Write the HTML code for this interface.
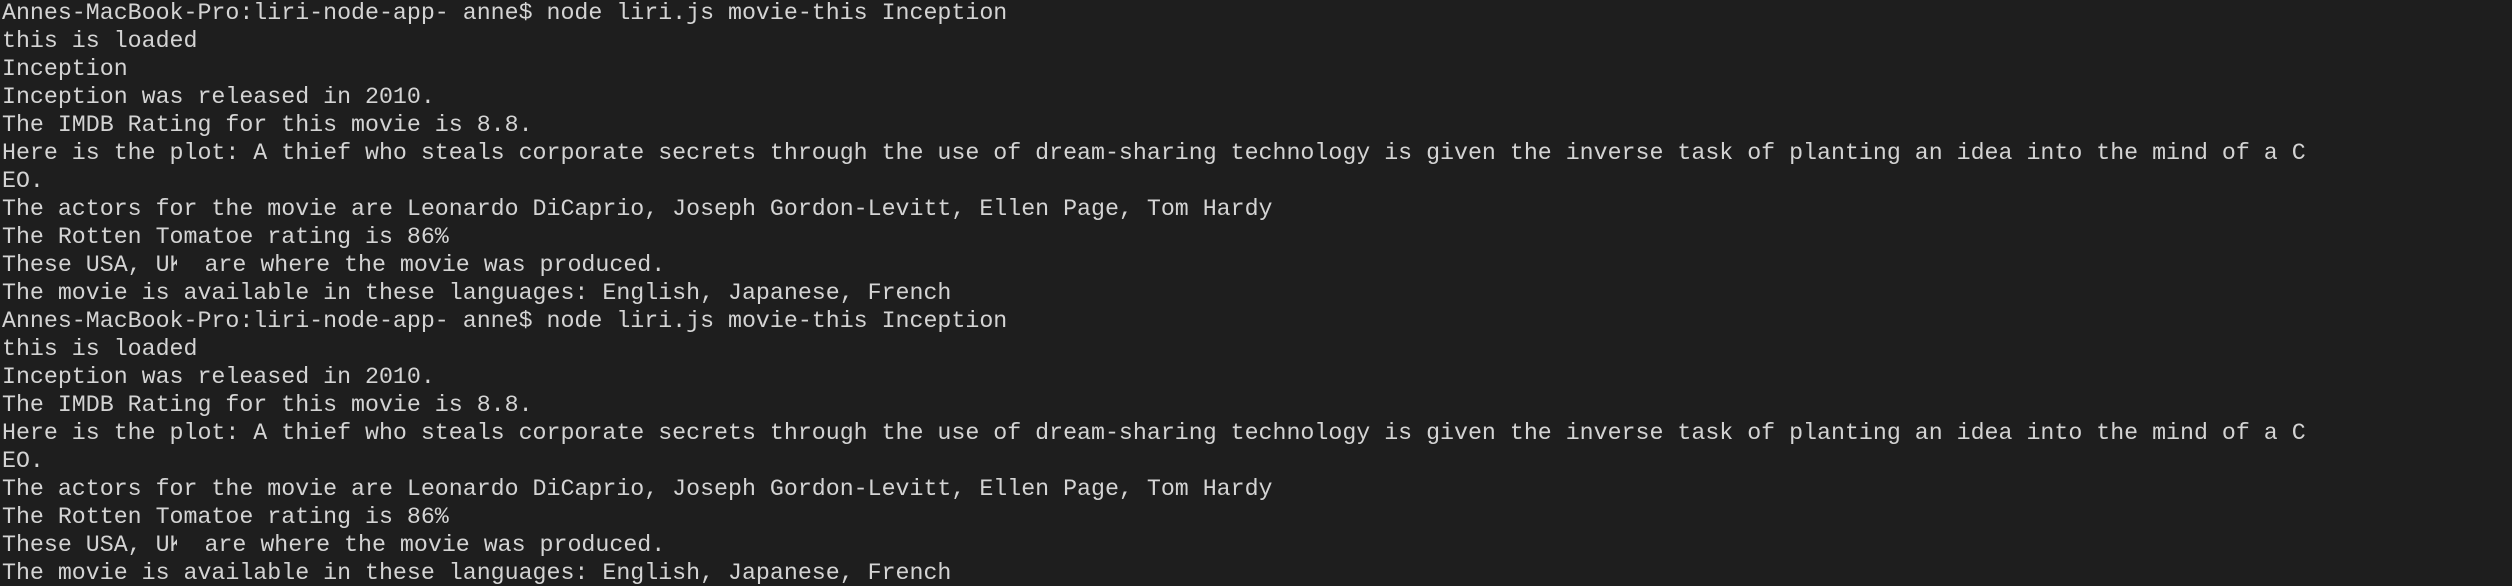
<!DOCTYPE html>
<html><head><meta charset="utf-8"><style>
html,body{margin:0;padding:0;background:#1e1e1e;width:2512px;height:586px;overflow:hidden}
pre{margin:-1px 0 0 2px;font-family:"Liberation Mono","DejaVu Sans Mono",monospace;font-size:23.28px;line-height:28px;color:#d4d4d4;white-space:pre}
.k{display:inline-block;width:7px;overflow:hidden;vertical-align:bottom}
</style></head><body><pre>Annes-MacBook-Pro:liri-node-app- anne$ node liri.js movie-this Inception
this is loaded
Inception
Inception was released in 2010.
The IMDB Rating for this movie is 8.8.
Here is the plot: A thief who steals corporate secrets through the use of dream-sharing technology is given the inverse task of planting an idea into the mind of a C
EO.
The actors for the movie are Leonardo DiCaprio, Joseph Gordon-Levitt, Ellen Page, Tom Hardy
The Rotten Tomatoe rating is 86%
These USA, U<span class="k">K</span>  are where the movie was produced.
The movie is available in these languages: English, Japanese, French
Annes-MacBook-Pro:liri-node-app- anne$ node liri.js movie-this Inception
this is loaded
Inception was released in 2010.
The IMDB Rating for this movie is 8.8.
Here is the plot: A thief who steals corporate secrets through the use of dream-sharing technology is given the inverse task of planting an idea into the mind of a C
EO.
The actors for the movie are Leonardo DiCaprio, Joseph Gordon-Levitt, Ellen Page, Tom Hardy
The Rotten Tomatoe rating is 86%
These USA, U<span class="k">K</span>  are where the movie was produced.
The movie is available in these languages: English, Japanese, French</pre></body></html>
